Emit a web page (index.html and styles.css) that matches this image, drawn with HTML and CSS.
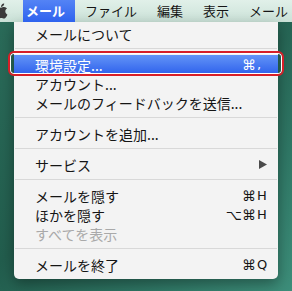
FILE: index.html
```html
<!DOCTYPE html>
<html lang="ja">
<head>
    <meta charset="UTF-8">
    <meta name="viewport" content="width=device-width, initial-scale=1.0">
    <title>メール メニュー</title>
    <link rel="stylesheet" href="styles.css">
</head>
<body>
    <div class="menubar">
        <div class="apple">
            <svg width="16" height="16" viewBox="0 0 170 170">
                <path fill="#3b3b3b" d="M150.37 130.25c-2.45 5.66-5.35 10.87-8.71 15.66-4.58 6.53-8.33 11.05-11.22 13.56-4.48 4.12-9.28 6.23-14.42 6.350-3.690 0-8.140-1.050-13.320-3.180-5.197-2.120-9.973-3.170-14.340-3.170-4.580 0-9.492 1.050-14.746 3.170-5.262 2.130-9.501 3.240-12.742 3.350-4.929 0.210-9.842-1.960-14.746-6.520-3.130-2.730-7.045-7.410-11.735-14.040-5.032-7.080-9.169-15.290-12.410-24.650-3.471-10.110-5.211-19.900-5.211-29.378 0-10.857 2.346-20.221 7.045-28.068 3.693-6.303 8.606-11.275 14.755-14.925s12.793-5.510 19.948-5.629c3.915 0 9.049 1.211 15.429 3.591 6.362 2.388 10.447 3.599 12.238 3.599 1.339 0 5.877-1.416 13.570-4.239 7.275-2.618 13.415-3.702 18.445-3.275 13.630 1.100 23.870 6.473 30.680 16.153-12.190 7.386-18.220 17.731-18.100 31.002 0.110 10.337 3.860 18.939 11.230 25.769 3.340 3.170 7.070 5.620 11.220 7.360-0.900 2.610-1.850 5.110-2.860 7.510zM119.11 7.240c0 8.102-2.960 15.667-8.860 22.669-7.120 8.324-15.732 13.134-25.071 12.375-0.119-0.972-0.188-1.995-0.188-3.070 0-7.778 3.386-16.102 9.399-22.908 3.002-3.446 6.820-6.311 11.450-8.597 4.620-2.252 8.990-3.497 13.100-3.710 0.120 1.083 0.170 2.166 0.170 3.240z"/>
            </svg>
        </div>
        <div class="menubar-item active">メール</div>
        <div class="menubar-item">ファイル</div>
        <div class="menubar-item">編集</div>
        <div class="menubar-item">表示</div>
        <div class="menubar-item">メール</div>
    </div>

    <div class="menu">
        <div class="menu-item">メールについて</div>
        <div class="separator"></div>
        <div class="menu-item selected">
            <span class="label">環境設定...</span>
            <span class="shortcut"><span class="mods">⌘</span><span class="key">,</span></span>
        </div>
        <div class="menu-item">アカウント...</div>
        <div class="menu-item">メールのフィードバックを送信...</div>
        <div class="separator"></div>
        <div class="menu-item">アカウントを追加...</div>
        <div class="separator"></div>
        <div class="menu-item">
            <span class="label">サービス</span>
            <svg class="arrow" width="8" height="9" viewBox="0 0 8 9">
                <polygon points="0,0 8,4.5 0,9" fill="#4a4a4a"/>
            </svg>
        </div>
        <div class="separator"></div>
        <div class="menu-item">
            <span class="label">メールを隠す</span>
            <span class="shortcut"><span class="mods">⌘</span><span class="key">H</span></span>
        </div>
        <div class="menu-item">
            <span class="label">ほかを隠す</span>
            <span class="shortcut"><span class="mods">⌥⌘</span><span class="key">H</span></span>
        </div>
        <div class="menu-item disabled">すべてを表示</div>
        <div class="separator"></div>
        <div class="menu-item">
            <span class="label">メールを終了</span>
            <span class="shortcut"><span class="mods">⌘</span><span class="key">Q</span></span>
        </div>
    </div>

    <div class="callout"></div>
</body>
</html>
```

FILE: styles.css
```css
body {
    margin: 0;
    width: 292px;
    height: 291px;
    overflow: hidden;
    position: relative;
    font-family: "Noto Sans CJK JP", "DejaVu Sans", sans-serif;
    background: linear-gradient(135deg, #2b6c5a 0%, #225d4d 45%, #2f7765 75%, #3d8e7a 100%);
}

.menubar {
    display: flex;
    height: 22px;
    background: linear-gradient(#e1f0e9, #cbe2d8);
    font-size: 13px;
    line-height: 22px;
    color: #151515;
    white-space: nowrap;
}

.apple {
    width: 23px;
    flex-shrink: 0;
    display: flex;
    align-items: center;
    overflow: hidden;
}

.apple svg {
    margin-left: -7px;
    margin-top: -1px;
}

.menubar-item {
    padding: 0 10px;
    flex-shrink: 0;
}

.menubar-item:last-child {
    padding-right: 0;
}

.menubar-item.active {
    padding: 0 10px 0 3px;
    font-weight: bold;
    color: #fff;
    background: linear-gradient(#5483f5, #2e62ee);
}

.menu {
    margin-left: 14px;
    width: 264px;
    padding: 2px 0 5px;
    background: #f3f3f3;
    border-radius: 0 0 5px 5px;
    box-shadow: 0 5px 14px rgba(0, 0, 0, 0.35);
    font-size: 14px;
    color: #151515;
}

.menu-item {
    display: flex;
    align-items: center;
    height: 19px;
    padding: 0 9px 0 21px;
    white-space: nowrap;
}

.menu-item .label {
    flex: 1;
}

.menu-item.selected {
    background: linear-gradient(#6394f7, #2f62ec);
    color: #fff;
}

.menu-item.disabled {
    color: #a9a9a9;
}

.shortcut {
    display: flex;
    font-family: "DejaVu Sans", sans-serif;
    font-size: 13px;
}

.shortcut .mods {
    font-size: 14px;
}

.shortcut .key {
    width: 12px;
    padding-left: 1px;
}

.arrow {
    margin-right: 2px;
}

.separator {
    height: 1px;
    margin: 5px 1px 6px;
    background: #d8d8d8;
}

.callout {
    position: absolute;
    left: 8px;
    top: 51px;
    width: 276px;
    height: 25px;
    box-sizing: border-box;
    border: 2px solid #d71f28;
    border-radius: 6px;
    box-shadow: inset 0 0 0 1px #fff;
}
```
